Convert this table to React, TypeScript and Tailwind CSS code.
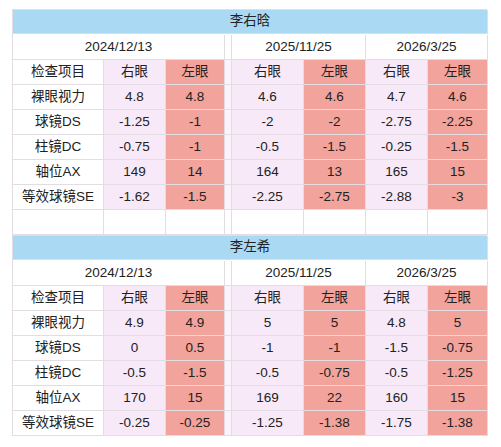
import React from 'react';

type Visit = { date: string; rows: [string, string][] };
type Person = { name: string; visits: Visit[]; blankRow?: boolean };

const labels = ['裸眼视力', '球镜DS', '柱镜DC', '轴位AX', '等效球镜SE'];

const people: Person[] = [
  {
    name: '李右晗',
    blankRow: true,
    visits: [
      { date: '2024/12/13', rows: [['4.8', '4.8'], ['-1.25', '-1'], ['-0.75', '-1'], ['149', '14'], ['-1.62', '-1.5']] },
      { date: '2025/11/25', rows: [['4.6', '4.6'], ['-2', '-2'], ['-0.5', '-1.5'], ['164', '13'], ['-2.25', '-2.75']] },
      { date: '2026/3/25', rows: [['4.7', '4.6'], ['-2.75', '-2.25'], ['-0.25', '-1.5'], ['165', '15'], ['-2.88', '-3']] },
    ],
  },
  {
    name: '李左希',
    visits: [
      { date: '2024/12/13', rows: [['4.9', '4.9'], ['0', '0.5'], ['-0.5', '-1.5'], ['170', '15'], ['-0.25', '-0.25']] },
      { date: '2025/11/25', rows: [['5', '5'], ['-1', '-1'], ['-0.5', '-0.75'], ['169', '22'], ['-1.25', '-1.38']] },
      { date: '2026/3/25', rows: [['4.8', '5'], ['-1.5', '-0.75'], ['-0.5', '-1.25'], ['160', '15'], ['-1.75', '-1.38']] },
    ],
  },
];

const cell = 'flex items-center justify-center border-r border-b border-[#e3dde3] whitespace-nowrap';
const right = `${cell} bg-[#f7e9f8]`;
const left = `${cell} bg-[#f2a39b]`;
const gap = `${cell} bg-[#faf3fa]`;
const plain = `${cell} bg-white`;

function Table({ p }: { p: Person }) {
  const [a, b, c] = p.visits;
  return (
    <div className="grid grid-cols-[91px_62px_59px_7px_72px_62px_62px_60px] auto-rows-[25px] border-l border-t border-[#e3dde3]">
      {/* name */}
      <div className={`${cell} col-span-8 h-[24px] bg-[#a9d9f3]`}>{p.name}</div>

      {/* dates */}
      <div className={`${plain} col-span-3`}>{a.date}</div>
      <div className={plain} />
      <div className={`${plain} col-span-2`}>{b.date}</div>
      <div className={`${plain} col-span-2`}>{c.date}</div>

      {/* head */}
      <div className={plain}>检查项目</div>
      <div className={right}>右眼</div>
      <div className={left}>左眼</div>
      <div className={gap} />
      <div className={right}>右眼</div>
      <div className={left}>左眼</div>
      <div className={right}>右眼</div>
      <div className={left}>左眼</div>

      {labels.map((label, i) => (
        <React.Fragment key={label}>
          <div className={plain}>{label}</div>
          <div className={right}>{a.rows[i][0]}</div>
          <div className={left}>{a.rows[i][1]}</div>
          <div className={gap} />
          <div className={right}>{b.rows[i][0]}</div>
          <div className={left}>{b.rows[i][1]}</div>
          <div className={right}>{c.rows[i][0]}</div>
          <div className={left}>{c.rows[i][1]}</div>
        </React.Fragment>
      ))}

      {p.blankRow &&
        [0, 1, 2, 3, 4, 5, 6, 7].map((k) => <div key={k} className={plain} />)}
    </div>
  );
}

export default function App() {
  return (
    <div
      className="w-[501px] h-[447px] bg-white pt-[9px] pl-[12px] text-[13.5px] text-[#222]"
      style={{ fontFamily: '"Liberation Sans", "Noto Sans CJK SC", sans-serif' }}
    >
      <div className="w-[475px] flex flex-col">
        {people.map((p) => (
          <Table key={p.name} p={p} />
        ))}
      </div>
    </div>
  );
}
